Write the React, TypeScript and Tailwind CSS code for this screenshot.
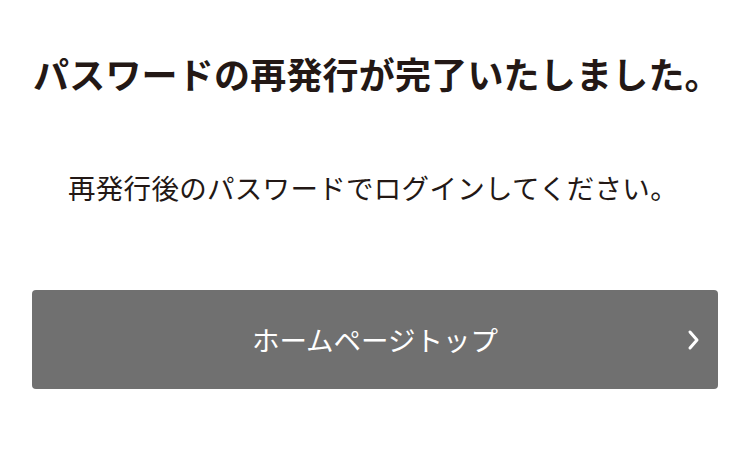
export default function App() {
  return (
    <div
      className="w-[750px] h-[462px] bg-white text-[#231815]"
      style={{ fontFamily: '"Noto Sans CJK JP", "Noto Sans", sans-serif' }}
    >
      <div className="pt-[50px] pl-[33px]">
        <h1 className="text-[36px] leading-[46px] font-bold tracking-[0.2px] whitespace-nowrap">
          パスワードの再発行が完了いたしました。
        </h1>
      </div>
      <p className="mt-[71px] pl-[68px] text-[27.5px] leading-[40px] tracking-[0.3px] whitespace-nowrap">
        再発行後のパスワードでログインしてください。
      </p>
      <div className="mt-[83px] px-[32px]">
        <a
          href="#"
          className="relative flex items-center justify-center w-[686px] h-[99px] rounded-[4px] bg-[#707070] text-white text-[27.5px]"
        >
          ホームページトップ
          <svg
            className="absolute right-[16px] top-1/2 -translate-y-1/2"
            width="16"
            height="22"
            viewBox="0 0 16 22"
            fill="none"
          >
            <path d="M4 3 L11 11 L4 19" stroke="white" strokeWidth="3" strokeLinecap="round" strokeLinejoin="round" />
          </svg>
        </a>
      </div>
    </div>
  );
}
